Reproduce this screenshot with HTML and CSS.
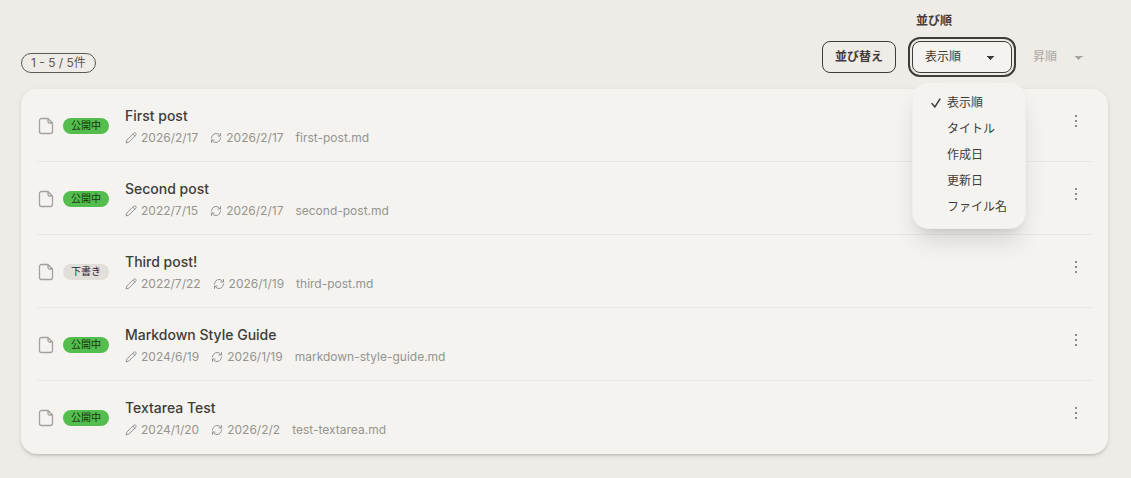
FILE: index.html
```
<!DOCTYPE html>
<html lang="ja">
  <head>
    <meta charset="UTF-8" />
    <meta name="viewport" content="width=device-width, initial-scale=1.0" />
    <title>記事一覧</title>
    <link rel="stylesheet" href="styles.css">
  </head>
  <body>
    <!-- アイコン定義 -->
    <svg class="sprite" aria-hidden="true">
      <symbol id="icon-file" viewBox="0 0 16 18">
        <path d="M10 1.5H3.5a2 2 0 0 0-2 2v11a2 2 0 0 0 2 2h9a2 2 0 0 0 2-2V6zM10 1.5v3a1.5 1.5 0 0 0 1.5 1.5h3" />
      </symbol>
      <symbol id="icon-pencil" viewBox="0 0 24 24">
        <path d="M16.5 3.5l1-1a2.8 2.8 0 0 1 4 4L7.5 20.3 2 22l1.7-5.5zM16 4.5l3.5 3.5" />
      </symbol>
      <symbol id="icon-refresh" viewBox="0 0 24 24">
        <path d="M3 12a9 9 0 0 1 9-9 9.75 9.75 0 0 1 6.74 2.74L21 8M21 3v5h-5M21 12a9 9 0 0 1-9 9 9.75 9.75 0 0 1-6.74-2.74L3 16M8 16H3v5" />
      </symbol>
      <symbol id="icon-more" viewBox="0 0 12 14">
        <path d="M5 1h2v2H5zM5 6h2v2H5zM5 11h2v2H5z" />
      </symbol>
    </svg>

    <header class="toolbar">
      <span class="count">1 - 5 / 5件</span>
      <div class="sort">
        <button class="sort-button" type="button">並び替え</button>
        <div class="field">
          <label class="field-label" for="sortKey">並び順</label>
          <select class="select select-open" id="sortKey">
            <option selected>表示順</option>
            <option>タイトル</option>
            <option>作成日</option>
            <option>更新日</option>
            <option>ファイル名</option>
          </select>
          <ul class="menu" role="listbox" aria-label="並び順">
            <li class="menu-item" role="option" aria-selected="true">
              <svg class="check" viewBox="0 0 10 10" aria-hidden="true"><path d="M1 5.5L3.8 9L9 1" /></svg>表示順
            </li>
            <li class="menu-item" role="option">タイトル</li>
            <li class="menu-item" role="option">作成日</li>
            <li class="menu-item" role="option">更新日</li>
            <li class="menu-item" role="option">ファイル名</li>
          </ul>
        </div>
        <select class="select select-order" aria-label="昇順・降順" disabled>
          <option selected>昇順</option>
          <option>降順</option>
        </select>
      </div>
    </header>

    <ul class="post-list">
      <li class="post">
        <svg class="file-icon" aria-hidden="true"><use href="#icon-file" /></svg>
        <span class="badge">公開中</span>
        <div class="post-body">
          <a class="post-title" href="#">First post</a>
          <div class="meta">
            <span class="meta-item"><svg class="meta-icon" aria-hidden="true"><use href="#icon-pencil" /></svg>2026/2/17</span>
            <span class="meta-item"><svg class="meta-icon" aria-hidden="true"><use href="#icon-refresh" /></svg>2026/2/17</span>
            <span>first-post.md</span>
          </div>
        </div>
        <button class="more" type="button" aria-label="メニュー"><svg class="more-icon"><use href="#icon-more" /></svg></button>
      </li>
      <li class="post">
        <svg class="file-icon" aria-hidden="true"><use href="#icon-file" /></svg>
        <span class="badge">公開中</span>
        <div class="post-body">
          <a class="post-title" href="#">Second post</a>
          <div class="meta">
            <span class="meta-item"><svg class="meta-icon" aria-hidden="true"><use href="#icon-pencil" /></svg>2022/7/15</span>
            <span class="meta-item"><svg class="meta-icon" aria-hidden="true"><use href="#icon-refresh" /></svg>2026/2/17</span>
            <span>second-post.md</span>
          </div>
        </div>
        <button class="more" type="button" aria-label="メニュー"><svg class="more-icon"><use href="#icon-more" /></svg></button>
      </li>
      <li class="post">
        <svg class="file-icon" aria-hidden="true"><use href="#icon-file" /></svg>
        <span class="badge badge-draft">下書き</span>
        <div class="post-body">
          <a class="post-title" href="#">Third post!</a>
          <div class="meta">
            <span class="meta-item"><svg class="meta-icon" aria-hidden="true"><use href="#icon-pencil" /></svg>2022/7/22</span>
            <span class="meta-item"><svg class="meta-icon" aria-hidden="true"><use href="#icon-refresh" /></svg>2026/1/19</span>
            <span>third-post.md</span>
          </div>
        </div>
        <button class="more" type="button" aria-label="メニュー"><svg class="more-icon"><use href="#icon-more" /></svg></button>
      </li>
      <li class="post">
        <svg class="file-icon" aria-hidden="true"><use href="#icon-file" /></svg>
        <span class="badge">公開中</span>
        <div class="post-body">
          <a class="post-title" href="#">Markdown Style Guide</a>
          <div class="meta">
            <span class="meta-item"><svg class="meta-icon" aria-hidden="true"><use href="#icon-pencil" /></svg>2024/6/19</span>
            <span class="meta-item"><svg class="meta-icon" aria-hidden="true"><use href="#icon-refresh" /></svg>2026/1/19</span>
            <span>markdown-style-guide.md</span>
          </div>
        </div>
        <button class="more" type="button" aria-label="メニュー"><svg class="more-icon"><use href="#icon-more" /></svg></button>
      </li>
      <li class="post">
        <svg class="file-icon" aria-hidden="true"><use href="#icon-file" /></svg>
        <span class="badge">公開中</span>
        <div class="post-body">
          <a class="post-title" href="#">Textarea Test</a>
          <div class="meta">
            <span class="meta-item"><svg class="meta-icon" aria-hidden="true"><use href="#icon-pencil" /></svg>2024/1/20</span>
            <span class="meta-item"><svg class="meta-icon" aria-hidden="true"><use href="#icon-refresh" /></svg>2026/2/2</span>
            <span>test-textarea.md</span>
          </div>
        </div>
        <button class="more" type="button" aria-label="メニュー"><svg class="more-icon"><use href="#icon-more" /></svg></button>
      </li>
    </ul>
  </body>
</html>
```
FILE: styles.css
```
* {
  box-sizing: border-box;
}

body {
  margin: 0;
  padding: 13px 23px 24px 21px;
  background-color: #efebe6;
  color: #3f3c39;
  font-family: Inter, "Noto Sans CJK JP", sans-serif;
  font-size: 12px;
  line-height: 16px;
}

button,
select {
  font: inherit;
  color: inherit;
}

svg {
  fill: none;
  stroke: currentColor;
  stroke-linecap: round;
  stroke-linejoin: round;
  flex-shrink: 0;
}

.sprite {
  display: none;
}

/* ツールバー */
.toolbar {
  display: flex;
  justify-content: space-between;
  align-items: flex-end;
  margin-bottom: 16px;
}

.count {
  height: 20px;
  padding: 0 9px;
  border: 1px solid #5c5855;
  border-radius: 10px;
  line-height: 18px;
  color: #5c5855;
}

.sort {
  display: flex;
  align-items: flex-end;
  padding-right: 8px;
}

.sort-button {
  height: 32px;
  margin-right: 16px;
  padding: 0 12px;
  border: 1px solid #3f3c39;
  border-radius: 8px;
  background: none;
  font-weight: 700;
  cursor: pointer;
}

.field {
  position: relative;
  display: flex;
  flex-direction: column;
  margin-right: 8px;
}

.field-label {
  margin-bottom: 12px;
  padding-left: 4px;
  font-weight: 700;
}

.select {
  height: 32px;
  padding: 0 25px 0 12px;
  border: 1px solid #3f3c39;
  border-radius: 8px;
  appearance: none;
  background-color: #f4f3ef;
  background-image: linear-gradient(45deg, transparent 50%, currentColor 50%),
    linear-gradient(135deg, currentColor 50%, transparent 50%);
  background-position: right 20px top 14px, right 16px top 14px;
  background-size: 4px 4px;
  background-repeat: no-repeat;
}

.select-open {
  outline: 2px solid #3f3c39;
  outline-offset: 2px;
}

.select-order {
  min-width: 80px;
  border-color: #efece8;
  background-color: transparent;
  color: #aaa7a3;
  opacity: 1;
}

/* 並び順のドロップダウン */
.menu {
  position: absolute;
  top: 100%;
  left: 0;
  z-index: 1;
  margin: 9px 0 0;
  padding: 7px 18px 8px;
  border: 1px solid #f0eeeb;
  border-radius: 16px;
  background-color: #f4f3ef;
  box-shadow: 0 16px 24px -4px rgba(0, 0, 0, 0.12), 0 6px 10px -6px rgba(0, 0, 0, 0.15);
  list-style: none;
  white-space: nowrap;
}

.menu-item {
  display: flex;
  align-items: center;
  gap: 6px;
  height: 26px;
  padding-left: 16px;
}

.menu-item[aria-selected="true"] {
  padding-left: 0;
}

.check {
  width: 10px;
  height: 10px;
  stroke-width: 1.4;
}

/* 記事リスト */
.post-list {
  margin: 0;
  padding: 0 16px;
  border-radius: 16px;
  background-color: #f4f3ef;
  box-shadow: 0 2px 3px -1px rgba(0, 0, 0, 0.18), 0 2px 6px rgba(0, 0, 0, 0.08);
  list-style: none;
}

.post {
  display: flex;
  align-items: center;
  height: 73px;
  padding-top: 2px;
  border-bottom: 1px solid #e9e7e3;
}

.post:last-child {
  border-bottom-color: transparent;
}

.file-icon {
  width: 16px;
  height: 18px;
  margin: 0 9px 0 1px;
  color: #a3a19e;
  stroke-width: 1.3;
}

.badge {
  width: 46px;
  height: 16px;
  margin-right: 16px;
  border-radius: 8px;
  background-color: #53bd4d;
  color: #17330f;
  font-size: 10px;
  line-height: 15px;
  text-align: center;
}

.badge-draft {
  background-color: #e2deda;
  color: #302038;
}

.post-body {
  flex: 1;
}

.post-title {
  display: block;
  color: #3f3c39;
  font-size: 14px;
  font-weight: 500;
  line-height: 20px;
  text-decoration: none;
}

.meta {
  display: flex;
  gap: 12px;
  margin-top: 4px;
  color: #969490;
}

.meta-item {
  display: flex;
  align-items: center;
  gap: 4px;
}

.meta-icon {
  width: 12px;
  height: 12px;
  stroke-width: 2;
}

.more {
  align-self: flex-start;
  display: flex;
  margin: 18px 5px 0 0;
  padding: 5px;
  border: none;
  background: none;
  color: #8c8a87;
  cursor: pointer;
}

.more-icon {
  width: 12px;
  height: 14px;
  fill: currentColor;
  stroke: none;
}
```
